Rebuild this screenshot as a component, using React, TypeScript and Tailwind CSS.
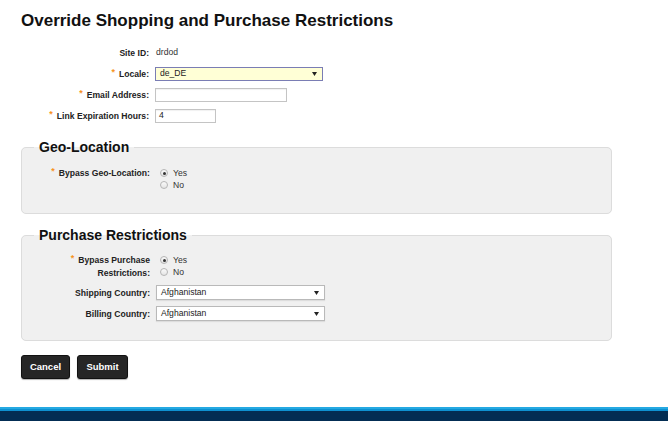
import React from "react";

const Star = () => (
  <span className="relative -top-[2px] mr-[4px] text-[#f7941d] text-[9px] font-bold">*</span>
);

const Label = ({ req, children, top }: { req?: boolean; children: React.ReactNode; top?: boolean }) => (
  <div
    className={`w-[128px] shrink-0 text-right font-bold text-[8.6px] leading-[12px] text-[#222] ${top ? "self-start" : ""}`}
  >
    {req && <Star />}
    {children}
  </div>
);

const Arrow = () => (
  <svg width="5" height="4" viewBox="0 0 5 4" className="shrink-0">
    <path d="M0 0H5L2.5 4Z" fill="#222" />
  </svg>
);

const Select = ({ value, w, locale }: { value: string; w: string; locale?: boolean }) => (
  <div
    className={`${w} ${
      locale
        ? "h-[14px] bg-[#ffffd6] border border-[#7a7db4]"
        : "h-[15px] bg-white border border-[#b9b9b9] shadow-[0_1px_1px_rgba(0,0,0,0.08)]"
    } flex items-center justify-between pl-[4px] pr-[5px] text-[8.6px] text-[#222]`}
  >
    <span>{value}</span>
    <Arrow />
  </div>
);

const Input = ({ value, w }: { value?: string; w: string }) => (
  <div
    className={`${w} h-[14px] bg-white border border-[#c4c4c4] shadow-[inset_0_1px_1px_rgba(0,0,0,0.06)] flex items-center pl-[3px] text-[8.6px] text-[#222]`}
  >
    {value}
  </div>
);

const Radio = ({ checked, label }: { checked?: boolean; label: string }) => (
  <div className="flex items-center h-[12px]">
    <span className="ml-[4px] w-[8px] h-[8px] rounded-full border border-[#b5b5b5] bg-gradient-to-b from-[#fafafa] to-[#e4e4e4] flex items-center justify-center">
      {checked && <span className="w-[3px] h-[3px] rounded-full bg-[#333]" />}
    </span>
    <span className="ml-[5px] text-[8.6px] text-[#333] leading-[12px]">{label}</span>
  </div>
);

const Row = ({ children, h = "h-[21px]" }: { children: React.ReactNode; h?: string }) => (
  <div className={`flex items-center ${h}`}>{children}</div>
);

export default function App() {
  return (
    <div
      className="w-[668px] h-[421px] bg-white flex flex-col overflow-hidden"
      style={{ fontFamily: '"Liberation Sans", Arial, sans-serif' }}
    >
      <div className="flex-1 px-[21px] pt-[11px]">
        <h1 className="text-[17px] leading-[20px] font-bold text-[#111]">
          Override Shopping and Purchase Restrictions
        </h1>

        <div className="mt-[11px]">
          <Row>
            <Label>Site ID:</Label>
            <div className="ml-[7px] text-[8.6px] text-[#333]">drdod</div>
          </Row>
          <Row>
            <Label req>Locale:</Label>
            <div className="ml-[6px]">
              <Select value="de_DE" w="w-[168px]" locale />
            </div>
          </Row>
          <Row>
            <Label req>Email Address:</Label>
            <div className="ml-[6px]">
              <Input w="w-[132px]" />
            </div>
          </Row>
          <Row>
            <Label req>Link Expiration Hours:</Label>
            <div className="ml-[6px]">
              <Input w="w-[61px]" value="4" />
            </div>
          </Row>
        </div>

        <fieldset className="mt-[13px] w-[591px] border border-[#dcdcdc] rounded-[5px] bg-[#f0f0f0] pt-[12px] pb-[22px]">
          <legend className="ml-[12px] px-[5px] text-[14px] leading-[16px] font-bold text-[#111]">
            Geo-Location
          </legend>
          <div className="flex">
            <Label req top>
              Bypass Geo-Location:
            </Label>
            <div className="ml-[6px] flex flex-col">
              <Radio checked label="Yes" />
              <Radio label="No" />
            </div>
          </div>
        </fieldset>

        <fieldset className="mt-[13px] w-[591px] border border-[#dcdcdc] rounded-[5px] bg-[#f0f0f0] pt-[11px] pb-[16px]">
          <legend className="ml-[12px] px-[5px] text-[14px] leading-[16px] font-bold text-[#111]">
            Purchase Restrictions
          </legend>
          <div className="flex">
            <div className="w-[128px] shrink-0 text-right font-bold text-[8.6px] leading-[12.5px] text-[#222]">
              <Star />
              Bypass Purchase
              <br />
              Restrictions:
            </div>
            <div className="ml-[6px] flex flex-col">
              <Radio checked label="Yes" />
              <Radio label="No" />
            </div>
          </div>
          <div className="mt-[3px]">
            <Row>
              <Label>Shipping Country:</Label>
              <div className="ml-[6px]">
                <Select value="Afghanistan" w="w-[169px]" />
              </div>
            </Row>
            <Row>
              <Label>Billing Country:</Label>
              <div className="ml-[6px]">
                <Select value="Afghanistan" w="w-[169px]" />
              </div>
            </Row>
          </div>
        </fieldset>

        <div className="mt-[14px] flex gap-[7px]">
          <button className="h-[24px] w-[49px] bg-[#262626] border border-[#111] rounded-[3px] text-white font-bold text-[9.5px] shadow-[0_1px_1px_rgba(0,0,0,0.3)]">
            Cancel
          </button>
          <button className="h-[24px] w-[51px] bg-[#262626] border border-[#111] rounded-[3px] text-white font-bold text-[9.5px] shadow-[0_1px_1px_rgba(0,0,0,0.3)]">
            Submit
          </button>
        </div>
      </div>

      <div className="shrink-0">
        <div className="h-[2px] bg-[#25a9e2]" />
        <div className="h-[2px] bg-[#0e91d1]" />
        <div className="h-[10px] bg-[#032d53]" />
      </div>
    </div>
  );
}
